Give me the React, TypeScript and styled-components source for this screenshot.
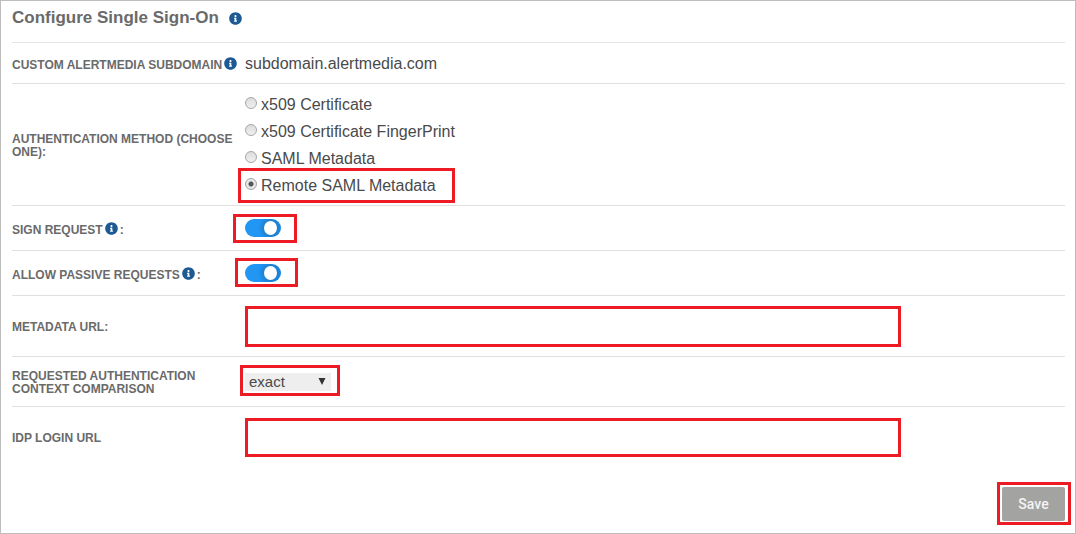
import React from "react";
import styled, { createGlobalStyle } from "styled-components";
import { FaInfoCircle } from "react-icons/fa";

const GlobalStyle = createGlobalStyle`
  *, *::before, *::after { box-sizing: border-box; }
  body {
    margin: 0;
    background: #fff;
    color: #4a4a4a;
    font: 16px/20px "Liberation Sans", Arial, sans-serif;
  }
`;

const Panel = styled.form`
  min-height: 100vh;
  padding: 0 10px 8px 11px;
  border: 1px solid #bdbdbd;
`;

const Title = styled.h1`
  display: flex;
  align-items: center;
  gap: 10px;
  margin: 0;
  padding: 7px 0 14px;
  border-bottom: 1px solid #e4e4e4;
  color: #6a6a6a;
  font-size: 17px;
  line-height: 20px;
`;

const InfoIcon = styled(FaInfoCircle)`
  flex: none;
  width: 13px;
  height: 13px;
  color: #1d5a94;
`;

const LabelIcon = styled(InfoIcon)`
  margin: 0 2px;
  vertical-align: -1px;
`;

const Row = styled.div<{ $height: number; $last?: boolean }>`
  display: grid;
  grid-template-columns: 233px minmax(0, 1fr);
  align-items: center;
  min-height: ${(p) => p.$height}px;
  border-bottom: ${(p) => (p.$last ? "0" : "1px solid #e0e0e0")};
`;

const labelText = `
  padding-top: 2px;
  color: #6a6a6a;
  font-size: 12px;
  font-weight: bold;
  line-height: 13px;
  text-transform: uppercase;
`;

const Label = styled.label`${labelText}`;
const Caption = styled.div`${labelText}`;

const Value = styled.div`
  padding-top: 2px;
`;

const Highlight = styled.div<{ $inset: string }>`
  position: relative;
  justify-self: start;
  &::after {
    content: "";
    position: absolute;
    inset: ${(p) => p.$inset};
    border: 3px solid #ed1c24;
    pointer-events: none;
  }
`;

const Options = styled.div`
  display: grid;
  justify-items: start;
  gap: 7px;
  padding-top: 2px;
`;

const Option = styled.label`
  display: flex;
  align-items: center;
  gap: 4px;
`;

const Radio = styled.input`
  appearance: none;
  width: 12px;
  height: 12px;
  margin: 0 0 4px;
  border: 1px solid #a6a6a6;
  border-radius: 50%;
  background: linear-gradient(#dcdcdc, #f0f0f0);
  &:checked {
    background: radial-gradient(circle, #555 2px, #e6e6e6 3px);
  }
`;

const Switch = styled.input`
  appearance: none;
  display: block;
  width: 36px;
  height: 18px;
  margin: 0;
  padding: 2px 1px;
  border-radius: 9px;
  background: #ccc;
  &:checked {
    padding-left: 19px;
    background: radial-gradient(circle at 26px 9px, #1b80d2 7px, #2196f3 13px);
  }
  &::before {
    content: "";
    display: block;
    width: 13px;
    height: 14px;
    border-radius: 50%;
    background: #fff;
  }
`;

const TextInput = styled.input<{ $height: number }>`
  width: 80%;
  height: ${(p) => p.$height}px;
  padding: 0 10px;
  border: 3px solid #ed1c24;
  border-radius: 0;
  background: #fff;
  color: inherit;
  font: inherit;
  outline: none;
`;

const SelectBox = styled.div`
  display: grid;
  align-items: center;
  width: 86px;
  background: #eee;
  > * { grid-area: 1 / 1; }
`;

const Select = styled.select`
  appearance: none;
  height: 18px;
  padding: 0 20px 0 4px;
  border: 0;
  border-radius: 0;
  background: transparent;
  color: #4a4a4a;
  font: inherit;
  font-size: 15px;
  line-height: 18px;
`;

const Arrow = styled.svg`
  justify-self: end;
  margin-right: 5px;
  pointer-events: none;
`;

const Footer = styled.div`
  display: flex;
  justify-content: flex-end;
  padding-top: 19px;
`;

const SaveButton = styled.button`
  display: block;
  width: 63px;
  height: 34px;
  padding: 0;
  border: 0;
  border-radius: 2px;
  background: #a3a3a1;
  color: #f4f4f4;
  font: 500 14px/20px Roboto, sans-serif;
`;

const methods = ["x509 Certificate", "x509 Certificate FingerPrint", "SAML Metadata"];

export default function App() {
  return (
    <>
      <GlobalStyle />
      <Panel onSubmit={(e: React.FormEvent) => e.preventDefault()}>
        <Title>Configure Single Sign-On <InfoIcon /></Title>

        <Row $height={41}>
          <Caption>Custom AlertMedia Subdomain<LabelIcon /></Caption>
          <Value>subdomain.alertmedia.com</Value>
        </Row>

        <Row $height={122} role="radiogroup" aria-labelledby="method">
          <Caption id="method">Authentication Method (Choose One):</Caption>
          <Options>
            {methods.map((name) => (
              <Option key={name}>
                <Radio type="radio" name="method" value={name} />
                {name}
              </Option>
            ))}
            <Highlight $inset="-8px -19px -7px -7px">
              <Option>
                <Radio type="radio" name="method" value="Remote SAML Metadata" defaultChecked />
                Remote SAML Metadata
              </Option>
            </Highlight>
          </Options>
        </Row>

        <Row $height={45}>
          <Label htmlFor="sign">Sign Request<LabelIcon />:</Label>
          <Highlight $inset="-5px -16px -6px -12px">
            <Switch id="sign" type="checkbox" defaultChecked />
          </Highlight>
        </Row>

        <Row $height={45}>
          <Label htmlFor="passive">Allow Passive Requests<LabelIcon />:</Label>
          <Highlight $inset="-6px -17px -5px -10px">
            <Switch id="passive" type="checkbox" defaultChecked />
          </Highlight>
        </Row>

        <Row $height={61}>
          <Label htmlFor="metadata">Metadata URL:</Label>
          <TextInput id="metadata" type="url" $height={41} />
        </Row>

        <Row $height={50}>
          <Label htmlFor="comparison">Requested Authentication Context Comparison</Label>
          <Highlight $inset="-8px -9px -5px -5px">
            <SelectBox>
              <Select id="comparison" defaultValue="exact">
                <option>exact</option>
                <option>minimum</option>
                <option>maximum</option>
                <option>better</option>
              </Select>
              <Arrow width="12" height="7" viewBox="0 0 12 7" aria-hidden="true">
                <path d="M0.5 0h7L4 7z" fill="#333" />
              </Arrow>
            </SelectBox>
          </Highlight>
        </Row>

        <Row $height={61} $last>
          <Label htmlFor="login">IDP Login URL</Label>
          <TextInput id="login" type="url" $height={39} />
        </Row>

        <Footer>
          <Highlight $inset="-5px -6px -4px -5px">
            <SaveButton type="submit">Save</SaveButton>
          </Highlight>
        </Footer>
      </Panel>
    </>
  );
}
